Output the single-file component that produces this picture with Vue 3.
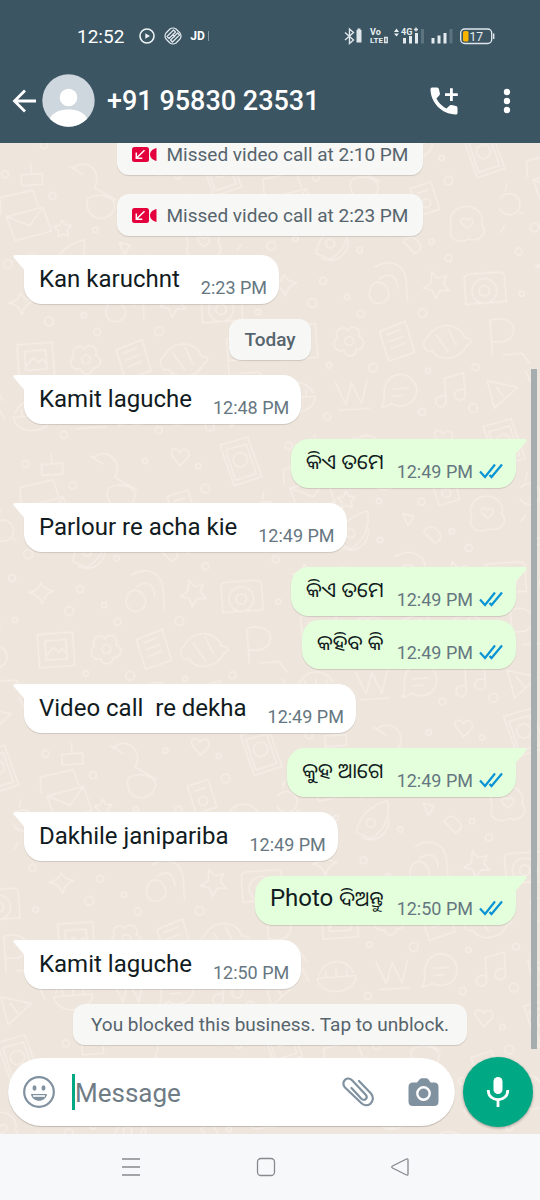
<script setup>
import { ref } from 'vue'

const draft = ref('')

const items = [
  { kind: 'call', text: 'Missed video call at 2:10 PM' },
  { kind: 'call', text: 'Missed video call at 2:23 PM' },
  { kind: 'in', text: 'Kan karuchnt', time: '2:23 PM', tail: true },
  { kind: 'day', text: 'Today' },
  { kind: 'in', text: 'Kamit laguche', time: '12:48 PM', tail: true },
  { kind: 'out', odia: 'କିଏ ତମେ', time: '12:49 PM', tail: true },
  { kind: 'in', text: 'Parlour re acha kie', time: '12:49 PM', tail: true },
  { kind: 'out', odia: 'କିଏ ତମେ', time: '12:49 PM', tail: true },
  { kind: 'out', odia: 'କହିବ କି', time: '12:49 PM', tail: false },
  { kind: 'in', text: 'Video call  re dekha', time: '12:49 PM', tail: true },
  { kind: 'out', odia: 'କୁହ ଆଗେ', time: '12:49 PM', tail: true },
  { kind: 'in', text: 'Dakhile janipariba', time: '12:49 PM', tail: true },
  { kind: 'out', text: 'Photo ', odia: 'ଦିଅନ୍ତୁ', time: '12:50 PM', tail: true },
  { kind: 'in', text: 'Kamit laguche', time: '12:50 PM', tail: true }
]
</script>

<template>
  <div class="screen">
    <header class="top">
      <div class="status">
        <span class="clock">12:52</span>
        <svg class="play" width="16" height="16" viewBox="0 0 16 16" fill="none" stroke="#eef3f5" stroke-width="1.6">
          <circle cx="8" cy="8" r="7" />
          <path d="M6.3 5.2v5.6L11 8z" fill="#eef3f5" stroke="none" />
        </svg>
        <svg class="knot" width="18" height="18" viewBox="0 0 18 18" fill="none" stroke="#e4eaed" stroke-width="1.2" stroke-linejoin="round">
          <path d="M6 2Q9 0 12 2l4 4q2 3 0 6l-4 4q-3 2-6 0l-4-4Q0 9 2 6z" />
          <path d="M3 9.500 9.500 3l2 2L5 11.500zM6.500 13l7-7 2 2-7 7zM8.500 15.500l-2-2.500M9 8l2 2" />
        </svg>
        <span class="jd">JD</span>
        <span class="jd-cut"></span>
        <svg class="signals" width="152" height="20" viewBox="0 0 152 20" fill="none" stroke="#dfe7ea">
          <path d="M1 6.500 9.500 14 5.500 17.500V3L9.500 6.500 1 14" stroke-width="1.400" />
          <path d="M12.500 4h1V2.500h3V4h1v12.500h-5z" fill="#dfe7ea" stroke="none" />
          <g fill="#e9eff1" stroke="none" font-family="Roboto, sans-serif" font-weight="700">
            <text x="26" y="9" font-size="9">Vo</text>
            <text x="26" y="17" font-size="8">LTE</text>
            <text x="57" y="9" font-size="9">4G</text>
          </g>
          <path d="M40.700 11.500h2.500v5h-2.500zM70 3.500h4M72 1.500v4" stroke-width="1.400" />
          <path d="m50 6 2.500-3.500L55 6zM50 7.500l2.500 3 2.500-3z" fill="#e9eff1" stroke="none" />
          <g fill="#e4ebee" stroke="none">
            <path d="M59 12h3v5.500h-3zM65 10h3v7.500h-3zM71 7h3v10.500h-3z" />
            <path d="M87.500 12h3v5.500h-3zM93.500 9.500h3v8h-3zM99.500 7h3v10.500h-3z" />
          </g>
          <path d="M77 3h3v14.500h-3zM105.500 3h3v14.500h-3z" fill="#5c7480" stroke="none" />
          <rect x="116.700" y="3" width="31" height="14.500" rx="4" stroke-width="1.400" />
          <path d="M149.700 7.500v5.500" stroke-width="1.400" />
          <rect x="119" y="5" width="5.500" height="10.500" rx="1.500" fill="#f8b400" stroke="none" />
          <text x="125.500" y="14.700" font-size="12" font-family="Roboto, sans-serif" fill="#e9eff1" stroke="none">17</text>
        </svg>
      </div>
      <div class="bar">
        <button class="plain back" aria-label="Back">
          <svg width="26" height="26" viewBox="0 0 26 26" fill="none" stroke="#fff" stroke-width="2.800">
            <path d="M25 13H3.500M14 2.500 3.500 13 14 23.500" />
          </svg>
        </button>
        <svg class="avatar" width="53" height="53" viewBox="0 0 53 53">
          <defs><clipPath id="face"><circle cx="26.500" cy="26.500" r="26.200" /></clipPath></defs>
          <circle cx="26.500" cy="26.500" r="26.200" fill="#ced6de" />
          <g fill="#fff" clip-path="url(#face)">
            <circle cx="26.500" cy="23.500" r="8.800" />
            <path d="M8 44c3-6 11-8.500 18.500-8.500S42 38 45 44v10H8z" />
          </g>
        </svg>
        <h1 class="contact">+91 95830 23531</h1>
        <button class="plain call" aria-label="Add call">
          <svg width="28" height="28" viewBox="0 0 28 28" fill="#fff">
            <path d="M2 .5h5Q8.600.5 8.900 2l1 4.500q.2 1.200-.7 2.100L6.400 11.500q3.400 6.600 10.100 10.100l2.900-2.900q.9-.9 2.100-.7l4.500 1q1.500.3 1.500 1.900v5q0 1.600-1.600 1.600C11.500 27.500.5 15.300.5 2.100Q.5.500 2 .5z" />
            <path d="M20 1.200h2.800v5h5V9h-5v5H20V9h-5V6.200h5z" />
          </svg>
        </button>
        <button class="plain more" aria-label="More options">
          <svg width="8" height="26" viewBox="0 0 8 26" fill="#fff">
            <circle cx="4" cy="4" r="3.200" /><circle cx="4" cy="13" r="3.200" /><circle cx="4" cy="22" r="3.200" />
          </svg>
        </button>
      </div>
    </header>

    <main class="body">
      <svg class="wallpaper" width="100%" height="100%" aria-hidden="true">
        <defs>
          <pattern id="doodles" width="300" height="330" patternUnits="userSpaceOnUse" patternTransform="translate(-8 20) rotate(-4) scale(.88)">
            <g fill="none" stroke="#f5eee7" stroke-width="1.700" stroke-linejoin="round" stroke-linecap="round">
              <path d="M12 62l42-8 8 28-42 8zM12 62l26 12 16-20M6 58V40l38-6 5 18" />
              <path d="M75 70l3 6 7 1-5 5 1 7-6-3-6 3 1-7-5-5 7-1z" />
              <path d="M60 128c4-18 18-30 38-34 2 18-4 32-22 42zM66 134c14 8 30 0 32-18M72 118a5 5 0 1 0 10 0 5 5 0 1 0-10 0" />
              <path d="M92 12c16-12 34 8 22 24M88 10l14 10M114 36l24 16M106 48a16 16 0 1 0 30 10c0-12-20-16-30-10z" />
              <path d="M172 62l24-6 8 32-24 6zM180 68l12-3M184 80a5 5 0 1 0 10 0 5 5 0 1 0-10 0" />
              <path d="M184 20c-10-10 2-16 6-7 6-8 16 2 6 9l-7 6z" />
              <path d="M236 8l32-7 13 46-32 8zM242 14l24-5 9 34-24 6zM250 27a8 8 0 1 0 16-2 8 8 0 1 0-16 2" />
              <path d="M216 108a18 16 0 1 1 34 0c8 12-4 20-16 16-14 6-24-4-18-16zM228 106c-4-6 4-8 6-3 3-5 10 0 5 5l-5 4z" />
              <path d="M272 92a12 12 0 1 0 2-12M280 72l2-8M294 98l4 1M276 112l-5 7" />
              <path d="M22 150c4 8 8 8 14 10-8 2-12 6-14 14-2-8-6-12-14-14 8-2 12-4 14-10z" />
              <path d="M126 148c16-8 34-2 34 18v24M130 162c12-8 20-2 20 12M120 170c12-14 28 10 14 18-10 6-22-4-14-18z" />
              <path d="M190 158l6 8 10-2-4 9 6 8-10-1-6 9-3-10-10-3 9-5z" />
              <path d="M232 164h34q6 0 6 6v28h-46v-28q0-6 6-6zM234 184a14 14 0 1 0 28 0 14 14 0 1 0-28 0M242 184a6 6 0 1 0 12 0 6 6 0 1 0-12 0" />
              <path d="M14 208h40v38H14zM22 216h24v22H22zM22 234l9-10 6 6 4-4 5 6" />
              <path d="M78 226a7 7 0 1 1 12-8 7 7 0 1 1 12 8 7 7 0 1 1-4 14 7 7 0 1 1-14 0 7 7 0 1 1-6-14zM86 230a5 5 0 1 0 10 0 5 5 0 1 0-10 0" />
              <path d="M126 222l30-10 8 36-30 8zM134 226l16-5M136 234l16-5M138 242l16-5" />
              <path d="M180 232c12-18 38-14 42 4 8 0 10 6 2 8-8 16-32 18-40 4-10 2-12-12-4-16zM190 230l12 20M204 224l8 20" />
              <path d="M252 218c14-4 26 2 26 12s-10 16-26 12zM252 218v40M264 258h22l8 12" />
              <path d="M6 286c10-18 30-18 40 0M4 290h44c-2 22-42 22-44 0zM14 290v-8M26 290v-10M38 290v-8" />
              <path d="M72 276l10 26 8-24 10 24 8-26M74 308h34" />
              <path d="M134 276a18 18 0 1 1 0 28c-4 4-8 4-12 4 4-4 4-8 4-12 0-8 2-16 8-20zM136 288h18M136 296h12" />
              <path d="M196 280v26a6 6 0 1 1-6-6h6M196 280l22-5v25a6 6 0 1 1-6-6h6" />
              <path d="M244 286l34 10-28 22zM254 294l8 12M288 278l6 14" />
              <path d="M138 100l12 4-7 10zM32 16h24v12H32zM44 16V4M160 122q8-10 16 0t-4 14z" />
              <circle cx="66" cy="42" r="4" /><circle cx="150" cy="20" r="3" /><circle cx="160" cy="88" r="4" />
              <circle cx="216" cy="56" r="5" /><circle cx="112" cy="84" r="3" /><circle cx="210" cy="144" r="4" />
              <circle cx="52" cy="184" r="5" /><circle cx="92" cy="180" r="3" /><circle cx="106" cy="200" r="4" />
              <circle cx="176" cy="204" r="5" /><circle cx="66" cy="256" r="3" /><circle cx="116" cy="262" r="5" />
              <circle cx="178" cy="270" r="3" /><circle cx="232" cy="270" r="4" /><circle cx="226" cy="316" r="5" />
              <circle cx="60" cy="314" r="4" /><circle cx="290" cy="142" r="4" /><circle cx="10" cy="116" r="5" /><circle cx="38" cy="110" r="3" />
              <circle cx="210" cy="30" r="3" /><circle cx="14" cy="14" r="4" /><circle cx="110" cy="128" r="3" /><circle cx="66" cy="160" r="4" />
              <circle cx="168" cy="316" r="4" /><circle cx="290" cy="190" r="3" /><circle cx="192" cy="124" r="3" />
            </g>
          </pattern>
        </defs>
        <rect width="100%" height="100%" fill="url(#doodles)" />
      </svg>

      <section class="thread">
        <template v-for="(m, i) in items" :key="i">
          <div v-if="m.kind === 'call'" class="pill missed">
            <svg width="25" height="17" viewBox="0 0 25 17" fill="#e4003c">
              <rect x="0" y="1" width="17" height="15" rx="2.500" />
              <path d="M24.500 2.800v11.400q0 1-1 .6C19.500 13.200 18 11 18 8.500s1.500-4.700 5.500-6.300q1-.4 1 .6z" />
              <path d="M12.500 4.300 4.500 12M4.300 6.500v5.800h6" fill="none" stroke="#fff" stroke-width="1.500" />
            </svg>
            <span>{{ m.text }}</span>
          </div>
          <div v-else-if="m.kind === 'day'" class="pill day">{{ m.text }}</div>
          <div v-else class="msg" :class="[m.kind, { follow: !m.tail }]">
            <svg v-if="m.tail" class="tail" width="12" height="16" viewBox="0 0 12 16">
              <path d="M12 0H2Q-.5.300.8 2.500L11 14.500l1 .5z" />
            </svg>
            <span class="text">{{ m.text }}<span v-if="m.odia" class="odia" lang="or">{{ m.odia }}</span></span>
            <span class="time">{{ m.time }}</span>
            <svg v-if="m.kind === 'out'" class="ticks" width="24" height="16" viewBox="0 0 24 16" fill="none" stroke="#0a94d6" stroke-width="2.200">
              <path d="M1 8.500 6 14 16 1.500M10.500 12l2 2L23 1.500" />
            </svg>
          </div>
        </template>
        <button class="pill blocked">You blocked this business. Tap to unblock.</button>
      </section>

      <div class="scroll"></div>

      <form class="compose" @submit.prevent>
        <div class="field">
          <button type="button" class="plain" aria-label="Emoji">
            <svg width="32" height="32" viewBox="0 0 32 32" fill="none" stroke="#8091a0" stroke-width="2.200">
              <circle cx="16" cy="16" r="14.800" />
              <ellipse cx="11.500" cy="12" rx="2" ry="2.700" fill="#8091a0" stroke="none" />
              <ellipse cx="20.500" cy="12" rx="2" ry="2.700" fill="#8091a0" stroke="none" />
              <path d="M8 18h16c-1 9-15 9-16 0z" fill="#8091a0" stroke="none" />
              <path d="M10 20h12" stroke="#fff" stroke-width="1.600" />
            </svg>
          </button>
          <span class="caret"></span>
          <input v-model="draft" type="text" placeholder="Message" aria-label="Message" />
          <button type="button" class="plain clip" aria-label="Attach">
            <svg width="32" height="30" viewBox="0 0 32 30" fill="none" stroke="#8091a0" stroke-width="2.200" stroke-linecap="round">
              <path d="M17 4 29 16.500C32 20 31 24.500 28.300 26.800c-3 2.200-6.800 1.700-9.300-1L3 10.500C.8 8 .9 4.700 3 2.900c2.200-1.900 5.300-1.500 7.300.6L23.700 17.800c2.800 3.300-1.300 6.700-4.300 4L9.500 11" />
            </svg>
          </button>
          <button type="button" class="plain" aria-label="Camera">
            <svg width="31" height="29" viewBox="0 0 31 29" fill="#8091a0">
              <path d="M5 4.500h4l2.500-3q1-1.200 2.500-1.200h4q1.500 0 2.500 1.200l2 3H26q4.500 0 4.500 4.500v14.500q0 4.500-4.500 4.500H5Q.5 28 .5 23.500V9Q.5 4.500 5 4.500z" />
              <circle cx="15.500" cy="15.500" r="6.200" stroke="#fff" stroke-width="2.400" />
            </svg>
          </button>
        </div>
        <button type="button" class="mic" aria-label="Record voice message">
          <svg width="24" height="32" viewBox="0 0 24 32" fill="none" stroke="#fff" stroke-width="2.800">
            <rect x="7.500" y="1" width="9" height="17" rx="4.500" fill="#fff" stroke="none" />
            <path d="M2.200 14c0 13 19.600 13 19.600 0M12 23.500V31" />
          </svg>
        </button>
      </form>
    </main>

    <nav class="keys">
      <button class="plain" aria-label="Recent apps">
        <svg width="20" height="20" viewBox="0 0 20 20" stroke="#85898d" stroke-width="1.500"><path d="M1 2h18M1 10h18M1 18h18" /></svg>
      </button>
      <button class="plain" aria-label="Home">
        <svg width="20" height="20" viewBox="0 0 20 20" fill="none" stroke="#85898d" stroke-width="1.300"><rect x="1.500" y="1.500" width="17" height="17" rx="3.500" /></svg>
      </button>
      <button class="plain" aria-label="Back">
        <svg width="20" height="20" viewBox="0 0 20 20" fill="none" stroke="#85898d" stroke-width="1.300"><path d="M16.500 2 2.500 9q-1.500 1 0 2l14 7q1.500.5 1.500-1V3q0-1.500-1.500-1z" /></svg>
      </button>
    </nav>
  </div>
</template>

<style>
body {
  margin: 0;
}
</style>

<style scoped>
.screen {
  display: flex;
  flex-direction: column;
  height: 100vh;
  overflow: hidden;
  font-family: Roboto, "Noto Sans Oriya", "Noto Sans", sans-serif;
  color: #111b21;
}
.screen svg {
  display: block;
  flex: none;
}
.plain {
  display: flex;
  padding: 0;
  border: 0;
  background: none;
}
.top {
  flex: none;
  background: #3b5563;
  color: #fff;
  position: relative;
  z-index: 1;
}
.status {
  display: flex;
  align-items: center;
  height: 60px;
  padding: 12px 44px 0 77px;
  box-sizing: border-box;
}
.clock {
  font-size: 19px;
}
.play {
  margin-left: 15px;
}
.knot {
  margin-left: 9px;
}
.jd {
  margin-left: 8px;
  font-size: 12px;
  font-weight: 700;
}
.jd-cut {
  width: 1px;
  height: 10px;
  margin-left: 3px;
  background: #8698a2;
}
.signals {
  margin-left: auto;
}
.bar {
  display: flex;
  align-items: center;
  height: 83px;
  padding: 0 29px 2px 11px;
  box-sizing: border-box;
}
.avatar {
  margin-left: 5px;
}
.contact {
  flex: 1;
  margin: 0 0 0 12px;
  font-size: 27px;
  line-height: 32px;
  font-weight: 500;
  white-space: nowrap;
}
.more {
  margin-left: 45px;
}
.body {
  flex: 1;
  min-height: 0;
  display: flex;
  flex-direction: column;
  position: relative;
  background: #eee5dc;
}
.wallpaper {
  position: absolute;
  inset: 0;
}
.thread {
  position: relative;
  flex: 1;
  min-height: 0;
  display: flex;
  flex-direction: column;
  justify-content: flex-end;
  gap: 15px;
  padding: 0 24px 12px;
}
.pill {
  align-self: center;
  display: flex;
  flex: none;
  align-items: center;
  height: 41px;
  padding: 0 15px;
  border: 0;
  border-radius: 12px;
  background: #f7f7f5;
  color: #56646d;
  font-family: inherit;
  font-size: 19px;
  box-shadow: 0 1px 1px #0002;
}
.missed {
  gap: 10px;
  height: 42px;
  margin-bottom: 4px;
}
.day {
  font-weight: 500;
}
.blocked {
  padding: 0 18px;
}
.msg {
  position: relative;
  flex: none;
  display: flex;
  height: 49px;
  box-sizing: border-box;
  border-radius: 18px;
  box-shadow: 0 1px 1px #0002;
}
.in {
  align-self: flex-start;
  padding: 0 12px 0 15px;
  background: #fff;
  border-top-left-radius: 0;
}
.out {
  align-self: flex-end;
  padding: 0 13px 0 15px;
  background: #e4ffdb;
  border-top-right-radius: 0;
}
.out.follow {
  margin-top: -11px;
  border-top-right-radius: 18px;
}
.tail {
  position: absolute;
  top: 0;
  left: -11px;
  fill: #fff;
}
.out .tail {
  left: auto;
  right: -11px;
  transform: scaleX(-1);
  fill: #e4ffdb;
}
.text {
  font-size: 24px;
  line-height: 49px;
  white-space: pre;
}
.out .text {
  line-height: 45px;
}
.odia {
  font-size: 21px;
}
.time {
  margin-left: 21px;
  padding-top: 17px;
  font-size: 18px;
  line-height: 32px;
  color: #667781;
  white-space: nowrap;
}
.out .time {
  margin-left: 13px;
}
.ticks {
  margin: 24px 0 0 6px;
}
.scroll {
  position: absolute;
  right: 3px;
  top: 226px;
  bottom: 85px;
  width: 6px;
  background: #a5adaf;
}
.compose {
  position: relative;
  display: flex;
  align-items: center;
  gap: 8px;
  margin: 0;
  padding: 0 7px 7px 8px;
}
.field {
  flex: 1;
  min-width: 0;
  display: flex;
  align-items: center;
  height: 68px;
  padding: 0 16px 0 15px;
  box-sizing: border-box;
  border-radius: 34px;
  background: #fff;
  box-shadow: 0 1px 1px #0003;
}
.caret {
  width: 3px;
  height: 36px;
  margin-left: 17px;
  background: #00a884;
}
.field input {
  flex: 1;
  min-width: 0;
  padding: 2px 0 0;
  border: 0;
  outline: 0;
  background: none;
  font-family: inherit;
  font-size: 26px;
  color: #111b21;
}
.field input::placeholder {
  color: #6f7c85;
  opacity: 1;
}
.clip {
  margin-right: 34px;
}
.mic {
  display: flex;
  align-items: center;
  justify-content: center;
  width: 70px;
  height: 70px;
  padding: 0;
  border: 0;
  border-radius: 50%;
  background: #00a884;
  box-shadow: 0 1px 3px #0005;
}
.keys {
  flex: none;
  display: flex;
  justify-content: space-between;
  align-items: center;
  height: 66px;
  padding: 0 130px 0 121px;
  background: #f7f8fa;
}
</style>
